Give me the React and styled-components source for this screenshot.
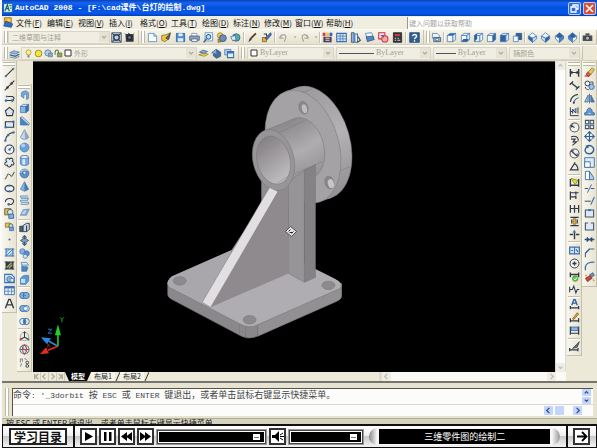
import React from "react";
import styled, { createGlobalStyle } from "styled-components";

const GlobalStyle = createGlobalStyle`
  * { box-sizing: border-box; }
  body { margin: 0; background: #fff; font-family: "Noto Sans CJK SC", sans-serif; }
  button, input, select { font: inherit; color: inherit; margin: 0; padding: 0; border: 0; background: none; border-radius: 0; }
`;

/* ---------- icon drawings: [path, fill, stroke, stroke width] ---------- */
const K = "#303a4a";
const B = "#3a70b0";
const L = "#9cc3ec";
const G = "#8b8b86";
const circ = (x, y, r) => `M${x - r} ${y}a${r} ${r} 0 1 0 ${2 * r} 0a${r} ${r} 0 1 0 ${-2 * r} 0z`;
const CUBE_T = "M2 5L6 2H14L10 5Z";
const CUBE_F = "M2 5H10V14H2Z";
const CUBE_S = "M10 5L14 2V11L10 14Z";
const cube = (t, f, s) => [[CUBE_T, t, B], [CUBE_F, f, B], [CUBE_S, s, B]];
const iso = (a, b, c) => [["M8 1L14 6L8 9L2 6Z", a, B], ["M2 6L8 9V15L2 10Z", b, B], ["M14 6L8 9V15L14 10Z", c, B]];
const dimEnds = [["M2 3V14M14 3V14", 0, K, 2], ["M2 8H14M5 6L2 8L5 10M11 6L14 8L11 10", 0, K, 1.5]];

const ICONS = {
  dwg: [["M2 1H12V9H2Z", "#e9b33b", "#8e5d10"], ["M4 6L14 10L12 15L1 13Z", "#2c6fce", "#1b3f80"], ["M5 4L9 3L11 6Z", "#f6e9a4"]],
  app: [["M1 1H15V15H1Z", "#d7efe8", "#1c4e73"], ["M3 13L7 3L10 13M5 9H9", 0, "#12686d", 2], ["M10 4H14M11 8H14", 0, "#2f9c6e", 2]],
  gear: [["M1 1H15V15H1Z", "#bcd0e6", K], [circ(8, 8, 4), 0, K, 2], ["M2 2L5 5M14 2L11 5M2 14L5 11M14 14L11 11", 0, K, 1.5]],
  gear2: [["M2 3H6V1L9 3H14V14H3Z", "#30343b"], [circ(8, 8, 3), "#5c6b80", "#101216"], ["M0 1L3 4M15 1L13 4M0 15L3 12", 0, G, 1]],
  new: [["M2 2H10L14 6V14H2Z", "#f5fbff", "#3a77b9"], ["M10 2V6H14", "#b9d6f4", "#3a77b9"]],
  open: [["M1 5L7 4L14 1L12 9L6 14L1 12Z", "#f2c33c", "#7d6116"], ["M7 9L13 2L11 11Z", "#526d86", K]],
  save: [["M2 2H14V14H2Z", "#4e8fd2", "#1c4f93"], ["M5 2H11V6H5Z", "#e7f2fc"], ["M4 9H12V14H4Z", "#dceafa"]],
  plot: [["M4 2H11L12 6H4Z", "#fff", "#6a7a93"], ["M1 6H15V12H1Z", "#8ea5c6", "#35507a"], ["M4 10H12V14H4Z", "#eef4fb", "#35507a"]],
  preview: [["M3 1H14V13H3Z", "#fafdff", "#3a77b9"], [circ(8, 7, 3.4), "#bcdcf6", "#315f92", 1.5], ["M5 10L1 15", 0, "#315f92", 2]],
  publish: [[circ(6, 5, 4), "#f2cd3c", "#8d741b"], [circ(10, 9, 5), "#6a8dc0", "#2c446d"], ["M3 10L8 14L3 15Z", "#e3ac2e", "#69531a"]],
  globe: [[circ(9, 8, 5.5), "#57a3b9", "#244e78"], ["M1 7L7 5L9 11L4 13Z", "#dceafc", "#386191"], ["M10 3L13 5L11 9Z", "#6cb057"]],
  brush: [["M2 15L4 9L7 11Z", K], ["M5 10L13 2", 0, "#56391d", 2.5]],
  match: [["M2 8H8V14H2Z", "#e8ac2d", "#69531a"], ["M6 9L14 1L15 4L9 11Z", "#3c78bd", "#1e3660"], ["M4 3H8V6", 0, K, 1.5]],
  undo: [["M2 9L5 4M2 9L8 9M3 8C7 1 15 3 9 14", 0, "#a9a69c", 1.8]],
  redo: [["M14 9L11 4M14 9L8 9M13 8C9 1 1 3 7 14", 0, "#a9a69c", 1.8]],
  down: [["M5 7H11L8 10Z", "#9b988d"]],
  props: [["M1 1H5V6H1Z", "#df3653"], ["M6 1H10V6H6Z", "#e6c83a"], ["M11 1H15V6H11Z", "#3d59c8"], ["M2 7H14V15H2Z", "#4a3d55"], ["M5 9H11M5 12H11", 0, "#f2d9e8", 1.5]],
  center: [["M1 2H15V14H1Z", "#d3e5f7", B, 1.5], ["M6 2V14M10 2V14M1 6H15M1 10H15", 0, B, 1]],
  palettes: [["M2 1H6V15H2Z", "#8bb5df", K], ["M7 3H11V15H7Z", "#e8f2fc", B, 1.5], ["M12 7L15 12L11 15", 0, K, 1.5]],
  sheets: [["M2 2L11 1L14 8L5 10Z", "#f0f7ff", B], ["M3 7L13 6L15 11L5 14Z", "#5288bc", "#284c7d"]],
  markup: [["M1 1H10V10H1Z", "#fae2e3", "#d22e43", 1.5], [circ(10, 10, 4.5), "#f1a9ae", "#d22e43", 1.5], ["M4 5H8V8", 0, B, 1.5]],
  calc: [["M2 1H14V15H2Z", "#32333a", "#18191d"], ["M4 3H12V6H4Z", "#c3443d"], ["M4 9H6M8 9H10M4 12H6M8 12H12", 0, "#ddd", 1.5]],
  help: [["M1 1H15V15H1Z", "#2e6095", "#173b62"], ["M5.5 6C5 3 11 2.500 11 6C11 8 8 8 8 10.500M8 12V14", 0, "#fff", 2]],
  named: [["M2 2H9L12 5V9H2Z", "#e9f3fd", "#456b95"], ["M4 8H14V14H4Z", "#8eb2d8", "#26476f"], [circ(9, 11, 2), "#fff", "#26476f"]],
  vTop: cube("#2c629f", "#f1f7fd", "#dbe8f4"),
  vBottom: [...cube("#f1f7fd", "#f1f7fd", "#dbe8f4"), ["M2 14L5 10H13L10 14Z", "#2c629f"]],
  vLeft: [...cube("#f1f7fd", "#e6f0fa", "#f1f7fd"), ["M2 5L6 2V10L2 14Z", "#2c629f"]],
  vRight: cube("#f1f7fd", "#f1f7fd", "#2c629f"),
  vFront: cube("#dceafa", "#2c629f", "#dbe8f4"),
  vBack: [["M6 2H14V11H6Z", "#2c629f", "#1f4878"], ["M2 6H9V14H2Z", "#f1f7fd", B]],
  isoSW: iso("#eaf3fc", "#2c629f", "#c2d9ee"),
  isoSE: iso("#eaf3fc", "#c2d9ee", "#2c629f"),
  isoNE: iso("#2c629f", "#eaf3fc", "#4e83b8"),
  isoNW: iso("#2c629f", "#4e83b8", "#eaf3fc"),
  camera: [["M1 5H15V13H1Z", "#4a4d54"], [circ(8, 9, 3), "#a7b8ca", "#222"], ["M5 2H11V5H5Z", "#4a4d54"]],
  layers: [["M1 7L7 4L15 6L9 9Z", "#9cbede", "#49729b"], ["M1 10L9 12L15 9", 0, "#3f6690", 2], ["M1 13L9 15L15 12", 0, "#7295b8", 1.5]],
  bulb: [[circ(8, 6, 4.5), "#fbf08b", "#b79b27", 1.5], ["M6 11H10V15H6Z", "#7d8ba1"]],
  sun: [[circ(8, 8, 6), "#f6e536", "#8a8a2b", 1.5]],
  freeze: [[circ(7, 7, 5.5), "#b7cde4", "#5f7d9c", 1.5], ["M8 7H15V14H8Z", "#8fa7bf", "#556f8a"]],
  lock: [["M6 7H14V14H6Z", "#8da65e", "#4e6530"], ["M2 10V5C2 1 8 1 8 5V8", 0, "#6c7b4d", 2]],
  swatch: [["M2 2H14V14H2Z", "#fff", "#333", 2]],
  layerPrev: [["M1 10L9 12L15 9L8 7Z", "#f0cf45", "#8a7a29"], ["M2 6L7 3L14 5L9 8Z", "#7ba8d4", "#40668d"]],
  layerUndo: [["M8 2L14 6V12L8 15L3 11Z", "#3f6ea0", "#274d76"], ["M7 2L1 7L8 9", "#88b1d8", "#31577e"]],
  layerState: [["M1 2H10V10H1Z", "#b3d1ec", B], ["M5 5H14V14H5Z", "#e2effb", B, 1.5], ["M5 5H14V8H5Z", B]],
  line: [["M2 14L14 2", 0, K, 1.6], [circ(2.500, 13.500, 1.5), B], [circ(13.500, 2.500, 1.5), B]],
  xline: [["M1 15L15 1", 0, K, 1.6], [circ(5, 11, 1.8), K], [circ(11, 5, 1.8), K]],
  pline: [["M3 5H12C16 6 15 11 11 11H2", 0, K, 1.5], [circ(3, 11, 2), B], [circ(4, 5, 1.5), B], ["M11 8L15 11L11 14Z", B]],
  polygon: [["M8 2L14 7L12 14H4L2 7Z", "#dbe4ed", K, 1.6]],
  rect: [["M2 4H14V12H2Z", "#dceaf7", K, 1.6], [circ(2.500, 12, 1.8), B], [circ(13.500, 4, 1.8), B]],
  arc: [["M2 14C3 7 6 3 14 2", 0, K, 1.6], [circ(2, 14, 1.7), B], [circ(6, 6, 1.7), B], [circ(14, 2, 1.7), B]],
  circle: [[circ(8, 8, 6.500), "#edf3f8", K, 1.7], [circ(8, 8, 1.7), B], ["M8 8L12 4", 0, B, 1.5]],
  cloud: [["M4 7C0 2 7 0 8 3C11 0 15 3 12 6C17 9 13 13 11 11C10 16 5 15 5 12C0 13 0 8 4 7Z", "#e5ecf2", K, 1.5]],
  spline: [["M1 13C5 13 4 4 7 6C11 8 10 13 15 3", 0, "#565d66", 1.5]],
  ellipse: [["M1.500 8a6.500 4.500 0 1 0 13 0a6.500 4.500 0 1 0 -13 0z", "#e7f1fa", K, 1.7], [circ(8, 4, 1.6), B], [circ(8, 12, 1.6), B]],
  ellArc: [["M2 9C1 2 15 2 14 8C13 12 10 13 7 12", 0, K, 1.5], [circ(7, 12, 2), B]],
  block: [["M1 1H10V10H1Z", "#e5c53c", K], [circ(9, 6, 4), "#dae7f1", K], ["M7 9H14V15H7Z", "#89b2db", B, 1.4]],
  block2: [["M2 3H9V9H2Z", "#e8ca4a", "#6f6123"], [circ(10, 7, 3), "#c7daeb", K], ["M8 9H14V14H8Z", "#6f9ed0", B]],
  point: [[circ(8, 8, 1.5), B]],
  hatch: [["M3 3H13V13H3Z", "#c3def3", B, 1.5], ["M3 13L13 3M3 8L8 3M8 13L13 8M1 3H4M12 3H15M1 13H4M12 13H15", 0, B, 1.1]],
  gradient: [["M3 3H13V13H3Z", "#303335", K, 1.5], ["M4 11L11 4M7 12L12 7", 0, "#a9ad6a", 2], ["M1 3H4M12 3H15M1 13H4M12 13H15", 0, K, 1.3]],
  region: [["M1 2H11L15 6V14H1Z", "#dfedf9", B, 1.5], [circ(8, 9, 4), "#92bae0", B, 1.3], ["M9 8H14V13H9Z", "#dfedf9", B]],
  table: [["M1 2H15V14H1Z", "#eaf3fc", B, 1.3], ["M1 2H15V5H1Z", B], ["M1 9H15M6 5V14M11 5V14", 0, B, 1]],
  text: [["M2 15L7 2H9L14 15M4 10H12", 0, K, 2]],
  polysolid: [["M4 3L10 1L14 4V12L11 14V6L7 7V12L3 9Z", "#78a9dc", "#4d7fb4"]],
  box: cube("#e2effb", "#8bb5e2", "#386fa9"),
  wedge: [["M2 2L14 13H2Z", "#4d84bc", B], ["M2 2L5 1L15 11L14 13Z", "#c6def5", B], ["M2 13L14 15V13Z", L]],
  cone: [["M8 1L14 12C12 16 4 16 2 12Z", "#c6d8ec", "#65809e"], ["M8 1L14 12C13 14 11 15 9 15Z", "#8aa5c4"]],
  sphere: [[circ(8, 8, 6.5), "#6a9fd8", "#4a7db6"], [circ(6, 5, 3), "#a9cff3"]],
  cyl: [["M2 3C4 0 12 0 14 3V13C12 16 4 16 2 13Z", "#77a8dc", B], ["M2 3C4 6 12 6 14 3C12 0 4 0 2 3Z", "#e9f3fd", B], ["M5 6H9V14H5Z", "#d6e9fa"]],
  torus: [[circ(8, 8, 6.5), "#5c90c6", "#3f6fa4"], [circ(8, 7, 2.3), "#e8eef4", "#2f5f94"], ["M3 7C3 2 10 2 12 4", 0, "#9fc6ec", 2]],
  pyramid: [["M8 1L14 12L8 15L2 12Z", "#88b2df", "#4a79ad"], ["M8 1L14 12L8 15Z", "#4379b5"]],
  helix: [["M2 3H13M3 6H14M2 9H13M3 12H14M2 15H13", 0, "#5a92ca", 1.6], ["M2 3L3 6M13 6L13 9M2 9L3 12M14 12V15", 0, B, 1]],
  planar: [["M2 12L6 4L15 3L11 12Z", "#83aede", "#6489b3"], ["M4 10L7 5L11 5L8 10Z", "#bcd8f3"]],
  extrude: [["M1 6H6V14H1Z", "#525d6b", K], ["M6 5L11 2H15V11L11 14H6Z", "#c4d6e7", K, 1.3], ["M11 5V14", 0, K, 1.5]],
  presspull: [["M8 4L14 8L8 12L2 8Z", "#7d9bbc", K], ["M8 1V6M5 4L8 1L11 4M8 10V15M5 12L8 15L11 12", 0, "#335987", 1.6]],
  sweep: [[circ(5, 5, 4), "#86b2e3", B], [circ(11, 8, 4), "#588ec8", B], [circ(9, 12, 3), "#d3e7f9", B]],
  revolve: [["M3 2H11L14 6H4Z", "#d9eafa", B], ["M4 7C8 10 12 6 13 10L11 15H4Z", "#4f85bd", B]],
  loft: [["M2 6L7 2H14V10L10 15H2Z", "#5995d7", "#3c74b2"], ["M3 7H9V13H3Z", "#c4def7"]],
  union: [[circ(5.500, 8, 4.500), "#82b0d8", B, 1.4], [circ(10.500, 8, 4.500), "#82b0d8", B, 1.4], ["M6 8H10", 0, B, 1]],
  subtract: [[circ(10.500, 8, 4.500), "#f2f7fc", B, 1.4], [circ(5.500, 8, 4.500), "#82b0d8", B, 1.4], [circ(9.500, 8, 3), "#fff", B]],
  intersect: [[circ(5.500, 8, 4.500), "#eef4fa", B, 1.4], [circ(10.500, 8, 4.500), 0, B, 1.4], ["M8 4C10 6 10 10 8 12C6 10 6 6 8 4Z", B]],
  move3d: [["M8 9V2M8 9L2 12M8 9L14 12", 0, K, 1.5], [circ(8, 8, 6), 0, G], ["M6 3L8 0L10 3Z", K], ["M1 10V14L5 13Z", "#c33"], ["M15 10V14L11 13Z", B]],
  rotate3d: [[circ(8, 8, 6.500), "#d6e2e8", "#3a8584", 1.5], ["M8 1C4 5 4 11 8 15C12 11 12 5 8 1M1 8H15", 0, "#c04848", 1.5], ["M3 3L13 13", 0, B]],
  align3d: [["M2 8V3H5V7M8 2L11 4M2 14L4 9", 0, G, 1.5], [circ(12, 8, 2), 0, K, 1.3], [circ(12, 13, 2), 0, K, 1.3]],
  dimLin: dimEnds,
  dimAli: [["M3 4L13 12M1 7L6 2M10 14L15 9", 0, K, 2]],
  dimArc: [["M2 13C3 6 6 3 13 2", 0, K, 1.6], ["M7 14C8 10 9 8 14 7", 0, B, 1.6], [circ(7, 14, 1.5), K]],
  dimOrd: [["M2 2V14H14M5 11V5L10 10V3M13 2V11M2 8H5", 0, K, 1.4], [circ(7, 7, 2), 0, B]],
  dimRad: [[circ(8, 8, 6.5), "#f0f1ec", "#55585c", 1.5], ["M8 8L3 5M3 5L6 4M3 5L4 8", 0, K, 1.5]],
  dimJog: [["M3 3C8 0 15 3 13 9", 0, K, 1.5], ["M3 6L9 6L6 10L11 10L5 15", 0, K, 1.6]],
  dimDia: [[circ(8, 8, 6.5), "#f0f1ec", "#55585c", 1.5], ["M3 4L12 12M3 4H7M12 12V8", 0, K, 1.5]],
  dimAng: [["M9 2L2 13H14M8 4C12 6 13 9 13 13", 0, K, 1.7]],
  dimQuick: [["M2 3V14M14 3V14M2 12H14", 0, K, 2], ["M3 2L13 5L9 11L6 7Z", "#e6dc31", "#6b7a1c"]],
  dimBase: [["M2 2V14M2 4H14M10 2V7M2 10H10M10 8V13", 0, K, 1.8]],
  dimCont: [["M2 3V14M8 3V14M14 3V14M2 8H14", 0, K, 1.8]],
  dimSpace: [["M2 2H14M2 14H14M4 5V11M12 5V11", 0, K, 1.8], ["M6 4H10V12H6Z", "#e2b13b", "#7b6431"]],
  dimBreak: [["M1 8H6M10 8H15M8 4V15", 0, K, 2], ["M5 5L8 1L10 5Z", B]],
  tol: [["M1 3H15V13H1Z", "#d4e6f6", B, 1.8], ["M8 3V13M3 8H6M10 6L13 10", 0, B, 1.5]],
  centerMark: [[circ(8, 8, 6.5), "#f2f3ef", K, 1.4], ["M8 5V11M5 8H11", 0, K, 2]],
  inspect: [["M2 2V9M14 2V9M2 5H14", 0, K, 2], [circ(9, 11, 4), "#6fc445", "#398a22"], ["M7 11L9 13L12 9", 0, "#fff", 1.3]],
  jogLine: [["M1 4V12M1 8H5L7 3L10 13L12 8H15", 0, K, 1.5]],
  dimEdit: [["M2 10V15M14 10V15M2 13H14", 0, K, 1.8], ["M4 9L7 1H9L12 9M5 6H11", 0, "#2d64a7", 2]],
  dimTedit: [["M2 9V15M14 9V15M2 13H14", 0, K, 1.8], ["M5 10L12 1L14 3L7 11Z", "#e3a32c", "#785018"]],
  dimUpd: [["M2 2V14M14 2V14M2 12H14", 0, K, 1.8], ["M3 3H13V8H3Z", "#8eb4dc", B, 1.3]],
  dimStyle: [["M1 10V15M13 10V15M1 13H13", 0, K, 1.8], ["M5 11L13 3L15 1L12 9Z", "#6c6e6f", K]],
  erase: [["M1 13H8", 0, "#cb3f3c", 2], ["M3 10L6 7L10 11L6 14Z", "#d7534f", "#863431"], ["M6 7L12 1L15 4L10 11Z", "#eac553", "#7f6a22"]],
  copy: [[circ(5, 5, 3.5), "#edf3f9", K, 1.4], [circ(11, 10, 3.8), "#a4c5e4", B, 1.4], ["M2 10C2 13 4 14 7 14M9 3L13 3L13 6", 0, K, 1.3]],
  mirror: [["M6 3V13H1Z", "#b1cde8", B, 1.3], ["M10 3V13H15Z", "#4a7cae", B, 1.3], ["M8 1V15", 0, K, 1]],
  offset: [["M1 13V10L4 9C4 1 12 1 12 9L15 10V13Z", "#6799cf", B, 1.4], ["M5 12C5 8 11 8 11 12Z", "#cfe2f5", B]],
  array: [["M2 2H7V7H2ZM9 2H14V7H9ZM2 9H7V14H2ZM9 9H14V14H9Z", "#e5edf4", "#43556d", 1.5]],
  move: [["M8 1V15M1 8H15M5 4L8 1L11 4M5 12L8 15L11 12M4 5L1 8L4 11M12 5L15 8L12 11", 0, "#2d619d", 1.6]],
  rotate: [["M4 4C8 0 15 4 14 9C13 15 5 16 2 11C1 8 2 6 4 4", 0, "#2d619d", 2], ["M2 2L7 2L6 7Z", "#2d619d"]],
  scale: [["M1 1H15V15H1Z", "#dceafa", B, 1.3], ["M1 7H9V15H1Z", "#fff", B, 1.3]],
  stretch: [["M2 2H8V14H2Z", "#fff", B, 1.3], ["M8 2L14 11V14H8Z", "#b6d1ec", B, 1.4]],
  trim: [["M1 8H6M10 8H15", 0, "#43556d", 1.5], ["M5 14L11 2", 0, B, 1.5]],
  extend: [["M1 9H10", 0, "#43556d", 1.5], ["M10 14L15 3", 0, B, 1.7]],
  breakPt: [["M2 3H14V13H2Z", "#dceaf8", "#43556d", 1.6], ["M6 3H10", 0, B, 3]],
  breakTwo: [["M6 3H2V13H14V3H10", "#dceaf8", "#43556d", 1.6]],
  join: [["M1 8H15M4 5L7 8L4 11M12 5L9 8L12 11", 0, "#2c4e7c", 2]],
  chamfer: [["M2 15V9L8 3H15", 0, "#56626f", 1.6], ["M2 9L8 3", 0, B, 2]],
  fillet: [["M2 15V10C3 5 6 3 15 3", 0, B, 2]],
  explode: [["M2 9L9 5L12 9L5 14Z", "#c8443d", "#7b2d29"], ["M8 4L13 1L15 5L11 7Z", "#6d93bf", "#314f79"], ["M2 4L4 6M13 11L15 13", 0, "#e29b34", 2]],
};

const Glyph = styled.svg`
  width: ${(p) => p.$size}px;
  height: ${(p) => p.$size}px;
  display: block;
  flex: none;
`;
function Icon({ name, size = 12 }) {
  return (
    <Glyph $size={size} viewBox="0 0 16 16" aria-hidden="true">
      {ICONS[name].map(([d, fill, stroke, w], i) => (
        <path key={i} d={d} fill={fill || "none"} stroke={stroke || "none"} strokeWidth={w || 1} />
      ))}
    </Glyph>
  );
}

/* ---------- window frame ---------- */
const Window = styled.div`
  min-height: 100vh;
  display: flex;
  flex-direction: column;
  background: #ece9d8;
  border-left: 2px solid #fbfbfd;
`;
const TitleBar = styled.header`
  height: 16px;
  display: flex;
  align-items: center;
  gap: 2px;
  padding: 0 1px;
  background: linear-gradient(#0a42b8 0, #1664f2 3px, #0450de 8px, #0558ee 13px, #0340b4);
`;
const Title = styled.h1`
  flex: 1;
  margin: 0;
  font: bold 8px/14px "Liberation Mono", "Noto Sans CJK SC", monospace;
  color: #fff;
  white-space: pre;
`;
const CaptionButton = styled.button`
  width: 13px;
  height: 13px;
  display: grid;
  place-items: center;
  border: 1px solid #b8ccf4;
  border-radius: 2px;
  background: ${(p) => (p.$close ? "#dc4b2b" : "#2f6ae0")};
`;

const MenuBar = styled.nav`
  height: 13px;
  display: flex;
  align-items: center;
  padding-left: 1px;
  background: #f0eee1;
`;
const MenuButton = styled.button`
  flex: none;
  min-width: 31px;
  padding-left: 2px;
  text-align: left;
  font-size: 8px;
  line-height: 12px;
  color: #111;
  white-space: nowrap;
`;
const HelpBox = styled.input`
  width: 32%;
  height: 12px;
  margin-left: auto;
  padding-left: 1px;
  border-left: 1px solid #9a998f;
  background: #fff;
  font-size: 7px;
  &::placeholder { color: #a5a398; opacity: 1; }
`;

const ToolRow = styled.div`
  display: grid;
  grid-template-columns: ${(p) => p.$columns};
  height: 16px;
  border-top: 1px solid #fbfaf4;
  border-bottom: 1px solid #d3cfbc;
`;
const ToolGroup = styled.div`
  display: flex;
  align-items: center;
  justify-content: ${(p) => (p.$start ? "flex-start" : "space-between")};
  gap: ${(p) => (p.$start ? 2 : 0)}px;
  min-width: 0;
  overflow: hidden;
  padding: 0 2px;
  border-right: 1px solid #c8c4b0;
  background: linear-gradient(#f7f5eb, #e5e1cf);
`;
const Grip = styled.span`
  flex: none;
  width: ${(p) => (p.$flat ? 12 : 4)}px;
  height: ${(p) => (p.$flat ? 4 : 12)}px;
  border: 1px solid #bdb9a5;
  ${(p) => (p.$flat ? "border-left: 0; border-right: 0;" : "border-top: 0; border-bottom: 0;")}
  background: #fff;
`;
const TallGrip = styled(Grip)`
  height: auto;
  align-self: stretch;
`;
const Divider = styled.span`
  flex: none;
  width: ${(p) => (p.$flat ? 12 : 2)}px;
  height: ${(p) => (p.$flat ? 2 : 11)}px;
  background: #c5c1ad;
  border: 0 solid #fff;
  border-width: ${(p) => (p.$flat ? "0 0 1px" : "0 1px 0 0")};
`;
const ToolButton = styled.button`
  flex: none;
  width: ${(p) => (p.$narrow ? 6 : 13)}px;
  height: 12px;
  display: grid;
  place-items: center;
  overflow: hidden;
`;
const Tools = ({ names, flat, size = 12 }) =>
  names.split(" ").map((n, i) =>
    n === "|" ? (
      <Divider key={i} $flat={flat} />
    ) : (
      <ToolButton key={i} aria-label={n} $narrow={n === "down"}>
        <Icon name={n} size={n === "down" ? 8 : size} />
      </ToolButton>
    )
  );

const Combo = styled.label`
  flex: ${(p) => p.$grow} 1 0;
  min-width: 0;
  height: 13px;
  display: flex;
  align-items: center;
  gap: 1px;
  padding-left: 2px;
  border: 1px solid #d9d5c5;
  background: #f0eee3;
`;
const ComboSelect = styled.select`
  flex: 1;
  min-width: 0;
  height: 11px;
  padding-left: 1px;
  appearance: none;
  font: ${(p) => (p.$latin ? '8px/10px "Liberation Serif", serif' : '7px/10px "Noto Sans CJK SC", sans-serif')};
  color: #a19e91;
`;
const ComboArrow = styled.svg`
  flex: none;
  width: 10px;
  height: 10px;
  background: #e6e3d6;
`;
const Sample = styled.span`
  flex: none;
  width: ${(p) => p.$length}px;
  height: 1px;
  background: #55534c;
`;
function DropDown({ label, value, grow, latin, children }) {
  return (
    <Combo $grow={grow}>
      {children}
      <ComboSelect aria-label={label} $latin={latin}>
        <option>{value}</option>
      </ComboSelect>
      <ComboArrow viewBox="0 0 10 10">
        <path d="M3 4L5 6L7 4" fill="none" stroke="#b2af9f" strokeWidth="1.3" />
      </ComboArrow>
    </Combo>
  );
}

/* ---------- work area ---------- */
const WorkArea = styled.div`
  flex: 1;
  display: flex;
  align-items: stretch;
  min-height: 0;
`;
const ToolStrip = styled.div`
  flex: none;
  align-self: flex-start;
  width: 15px;
  height: ${(p) => p.$height}px;
  margin-top: ${(p) => p.$top || 0}px;
  padding: 1px 0 2px;
  display: flex;
  flex-direction: column;
  align-items: center;
  justify-content: space-between;
  border: solid #c4c0ac;
  border-width: 0 1px 1px 0;
  background: linear-gradient(90deg, #f8f6ed, #e8e4d3);
`;
const Drawing = styled.main`
  flex: 1;
  min-width: 0;
  display: flex;
  flex-direction: column;
  margin: 0 1px;
`;
const CanvasRow = styled.div`
  flex: 1;
  display: flex;
  min-height: 0;
`;
const Canvas = styled.div`
  flex: 1;
  min-width: 0;
  display: flex;
  background: #000;
  border-top: 1px solid #55534b;
`;
const Scene = styled.svg`
  flex: 1;
  min-width: 0;
  width: 100%;
  height: 100%;
`;
const VScroll = styled.div`
  width: 11px;
  display: flex;
  flex-direction: column;
  justify-content: space-between;
  background: #fcfcfa;
  border: solid #dedbce;
  border-width: 0 1px;
`;
const ScrollButton = styled.button`
  width: 9px;
  height: 9px;
  display: grid;
  place-items: center;
  border-radius: 1px;
  background: ${(p) => (p.$active ? "#c3d5fb" : "#eeece4")};
  color: ${(p) => (p.$active ? "#334f86" : "#bebbb0")};
`;
const Arrow = ({ d }) => (
  <Glyph $size={7} viewBox="0 0 8 8">
    <path d={d} fill="none" stroke="currentColor" strokeWidth="1.5" />
  </Glyph>
);
const UP = "M2 5L4 3L6 5";
const DOWN = "M2 3L4 5L6 3";
const LEFT = "M5 1L2 4L5 7";
const RIGHT = "M3 1L6 4L3 7";

const TabRow = styled.div`
  height: 9px;
  display: flex;
  align-items: stretch;
  background: #ece9d8;
`;
const TabNav = styled.button`
  width: 8px;
  height: 9px;
  display: grid;
  place-items: center;
  border-right: 1px solid #cfccbe;
  color: #aaa79b;
`;
const Tab = styled.button`
  height: 9px;
  padding: 0 ${(p) => (p.$active ? 6 : 3)}px;
  font-size: 7px;
  line-height: 9px;
  font-weight: ${(p) => (p.$active ? 700 : 400)};
  color: ${(p) => (p.$active ? "#fff" : "#222")};
  background: ${(p) => (p.$active ? "#000" : "#f5f3ea")};
  clip-path: ${(p) => (p.$active ? "polygon(0 0, 100% 0, calc(100% - 4px) 100%, 4px 100%)" : "none")};
`;
const Slash = styled.svg`
  width: 5px;
  height: 9px;
`;
const HScroll = styled.div`
  width: 35%;
  margin-left: auto;
  padding-right: 10px;
  display: flex;
  justify-content: space-between;
  background: #faf9f5;
  border-left: 3px solid #dedbce;
`;

/* ---------- command window ---------- */
const CommandWindow = styled.section`
  display: flex;
  padding: 5px 4px 2px 3px;
  border-top: 2px solid #77756b;
  background: #e6e3d1;
`;
const CommandBox = styled.div`
  flex: 1;
  min-width: 0;
  margin-left: 3px;
  display: grid;
  grid-template-columns: 1fr 11px;
  grid-template-rows: 15px 12px;
  border: solid #55534c;
  border-width: 1px 0 0 1px;
  background: #fcfcfb;
`;
const History = styled.output`
  overflow: hidden;
  font: 9px/11px "Noto Sans CJK SC", sans-serif;
  color: #444;
  white-space: pre;
`;
const Latin = styled.span`
  font: 8px/11px "Liberation Mono", monospace;
`;
const Spin = styled.div`
  display: grid;
  gap: 1px;
  align-content: end;
  button { height: 7px; }
`;
const Prompt = styled.div`
  grid-column: 1 / -1;
  display: flex;
  align-items: center;
  gap: 2px;
  padding-right: 11px;
  border-top: 1px solid #d8d7d2;
`;
const PromptInput = styled.input`
  flex: 1;
  min-width: 0;
  height: 10px;
  font-size: 8px;
`;
const Thumb = styled.span`
  width: 9px;
  height: 9px;
  margin-right: 7px;
  border-radius: 1px;
  background: #c3d5fb;
`;
const StatusBar = styled.footer`
  height: 6px;
  overflow: hidden;
  padding-left: 4px;
  border-top: 1px solid #b1ae9b;
  background: #d5d3bf;
  font-size: 8px;
  line-height: 8px;
  color: #222;
  white-space: nowrap;
`;

/* ---------- player ---------- */
const Player = styled.section`
  height: 24px;
  display: flex;
  align-items: center;
  gap: 2px;
  padding: 0 6px;
  border: solid #111;
  border-width: 2px 1px 1px;
  background: linear-gradient(#fff, #f0f0f0 45%, #c9c9c9 50%, #f4f4f4);
`;
const Bar = styled.span`
  flex: none;
  align-self: stretch;
  width: 2px;
  margin: 0 3px 0 4px;
  background: #111;
`;
const Contents = styled.button`
  flex: none;
  width: 58px;
  height: 17px;
  border: 2px solid #222;
  background: #fff;
  font-size: 12px;
  font-weight: 700;
  line-height: 12px;
  color: #111;
`;
const PlayerButton = styled.button`
  flex: none;
  width: 17px;
  height: 17px;
  display: grid;
  place-items: center;
  border: 2px solid #333;
  background: #fff;
`;
const Track = styled.label`
  flex: ${(p) => p.$grow} 1 0;
  min-width: 0;
  height: 14px;
  margin: 0 1px;
  display: flex;
  border: 1px solid #444;
  outline: 1px solid #999;
  padding: 1px;
  background: #fff;
`;
const Slider = styled.input`
  appearance: none;
  width: 100%;
  height: 10px;
  padding-right: 4px;
  background: #000;
  &::-webkit-slider-thumb {
    appearance: none;
    width: 7px;
    height: 6px;
    background: linear-gradient(#fff 2px, #777 2px, #777 3px, #fff 3px);
    border: 1px solid #fff;
  }
`;
const Caption = styled.div`
  flex: 188 1 0;
  min-width: 0;
  height: 17px;
  margin-left: 3px;
  padding: 1px 10px;
  border-radius: 9px;
  background: linear-gradient(90deg, #888, #f6f6f6 8px, #f6f6f6 calc(100% - 8px), #999);
`;
const CaptionText = styled.p`
  margin: 0;
  background: #000;
  color: #fff;
  text-align: center;
  font-size: 9px;
  line-height: 15px;
`;

const MENUS = [["文件", "F"], ["编辑", "E"], ["视图", "V"], ["插入", "I"], ["格式", "O"], ["工具", "T"], ["绘图", "D"], ["标注", "N"], ["修改", "M"], ["窗口", "W"], ["帮助", "H"]];

function Bracket() {
  const edge = "#787578";
  return (
    <Scene viewBox="33 61 523 309" role="img" aria-label="3D bracket">
      <defs>
        <linearGradient id="tube" gradientUnits="userSpaceOnUse" x1="280" y1="122" x2="302" y2="184">
          <stop offset="0" stopColor="#8b888b" />
          <stop offset="0.5" stopColor="#b0adb0" />
          <stop offset="1" stopColor="#908d90" />
        </linearGradient>
        <linearGradient id="bore" x1="0" y1="0" x2="0.3" y2="1">
          <stop offset="0" stopColor="#7d797d" />
          <stop offset="1" stopColor="#bdbabd" />
        </linearGradient>
        <linearGradient id="rim" gradientUnits="userSpaceOnUse" x1="310" y1="85" x2="335" y2="200">
          <stop offset="0" stopColor="#9b989b" />
          <stop offset="0.5" stopColor="#b5b2b5" />
          <stop offset="1" stopColor="#918e91" />
        </linearGradient>
      </defs>
      <g stroke={edge} strokeWidth="0.6" strokeLinejoin="round">
        <path d="M168 281V293Q168 296 172 298L242 335Q248 338 255 336L337 300Q342 298 342 295V282L255 322L240 321Z" fill="#8b888c" />
        <path d="M342 283V295Q342 298 337 300L258 335V323Z" fill="#939094" />
        <path d="M172 275L288 224L337 278Q344 282 341 287L258 323.500Q250 328 240 322.500L170 286Q165 281 172 275Z" fill="#b0adb2" stroke="none" />
        <path d="M168 281Q168 285 170 286L240 322.500Q250 328 258 323.500L341 287Q342 285 342 282" fill="none" />
        <path d="M240 323V334M246 326V336M258 324V335" fill="none" />
        <path d="M339 279L316 267.500L291 254V224L231 249L260 150H342Z" fill="#000" stroke="none" />
        <path d="M172 275L231.500 249V262L203 302L170 286Q165 281 172 275Z" fill="#aaa7ac" stroke="none" />
        {[[180, 279.500], [329, 284], [250, 318.500]].map(([x, y]) => (
          <ellipse key={x} cx={x} cy={y} rx="6.500" ry="4.200" fill="#8d8a8d" />
        ))}
      </g>
      <g stroke={edge} strokeWidth="0.5">
        <ellipse cx="314.500" cy="141" rx="36" ry="58" transform="rotate(-16 314.5 141)" fill="url(#rim)" />
        <path d="M286 89.700L297 85.700L332 196.300L321 200.300Z" fill="url(#rim)" stroke="none" />
        <ellipse cx="303.500" cy="145" rx="36" ry="58" transform="rotate(-16 303.5 145)" fill="#a5a2a6" />
        <path d="M303 91L313 87M341 169L351 165" />
        <ellipse cx="304" cy="106" rx="4.500" ry="6.500" transform="rotate(-16 304 106)" fill="#8a878a" />
        <ellipse cx="305" cy="107" rx="2.500" ry="4.500" transform="rotate(-16 305 107)" fill="#c0bdc0" stroke="none" />
        <ellipse cx="330" cy="181" rx="4.500" ry="6.500" transform="rotate(-16 330 181)" fill="#8a878a" />
        <ellipse cx="331.500" cy="182" rx="3" ry="4.500" transform="rotate(-16 331.5 182)" fill="#c8c5c8" stroke="none" />
        <path d="M262 176L289 171V207L231.500 262V249L262 203Z" fill="#8b888c" stroke="none" />
        <path d="M262 176L289 171V225H262Z" fill="#908d91" stroke="none" />
        <ellipse cx="304" cy="146.500" rx="20.500" ry="31" transform="rotate(-14 304 146.5)" fill="url(#tube)" />
        <path d="M264.700 129L294.700 117L313.300 176L283.300 188Z" fill="url(#tube)" stroke="none" />
        <path d="M264.700 129L294.700 117M275 133L305 119" fill="none" />
        <path d="M289 180L305 169V281L289 272Z" fill="#979498" />
        <path d="M305 168.500L316 163V276L305 281Z" fill="#858286" />
        <path d="M291 174L323 160" fill="none" />
        <ellipse cx="274" cy="158.500" rx="20.500" ry="31" transform="rotate(-14 274 158.5)" fill="#989598" />
        <ellipse cx="274" cy="158.500" rx="16.500" ry="24.500" transform="rotate(-14 274 158.5)" fill="url(#bore)" />
        <path d="M259 151L281 141M277 182L290 174" fill="none" stroke="#8b888b" />
        <path d="M278 190L289 186V272L211 306Z" fill="#8e8a8d" stroke="none" />
        <path d="M270 186L278.500 190L211 306L202.500 301Z" fill="#e2dfe3" />
      </g>
      <path d="M286 230L291 225L297 230L292 235Z" fill="#e8e8e8" stroke="#333" strokeWidth="0.8" />
      <path d="M289 230L291 228M292 232L294 230M290 231H293" fill="none" stroke="#222" />
      <g strokeWidth="1.6" fill="none">
        <path d="M58 345V333" stroke="#1bd321" />
        <path d="M55 334L58 323L61 334Z" fill="#1bd321" />
        <path d="M58 345L49 340" stroke="#2688e2" />
        <path d="M41 336L51 337L47 343Z" fill="#2688e2" />
        <path d="M58 345L48 349" stroke="#ea2920" />
        <path d="M40 353L46 346L49 352Z" fill="#ea2920" />
        <path d="M60 316L62 318L64 316M62 318V321" stroke="#18a51d" strokeWidth="1" />
        <path d="M48 328H52L48 332H52" stroke="#1d6cc0" strokeWidth="1" />
        <path d="M47 342L50 346M50 342L47 346" stroke="#a31e19" strokeWidth="1" />
      </g>
    </Scene>
  );
}

export default function App() {
  return (
    <>
      <GlobalStyle />
      <Window>
        <TitleBar>
          <Icon name="app" size={10} />
          <Title>AutoCAD 2008 - [F:\cad课件\台灯的绘制.dwg]</Title>
          <CaptionButton aria-label="Restore">
            <svg width="9" height="9" viewBox="0 0 9 9"><path d="M3 3V1H8V5H6M1 3H6V8H1Z" fill="none" stroke="#fff" strokeWidth="1.3" /></svg>
          </CaptionButton>
          <CaptionButton $close aria-label="Close">
            <svg width="9" height="9" viewBox="0 0 9 9"><path d="M1 1L8 8M8 1L1 8" stroke="#fff" strokeWidth="1.7" /></svg>
          </CaptionButton>
        </TitleBar>
        <MenuBar>
          <Icon name="dwg" size={11} />
          {MENUS.map(([t, k]) => (
            <MenuButton key={k}>{t}(<u>{k}</u>)</MenuButton>
          ))}
          <HelpBox aria-label="帮助" placeholder="键入问题以获取帮助" />
        </MenuBar>
        <ToolRow $columns="137fr 285fr 173fr">
          <ToolGroup>
            <Grip />
            <DropDown label="工作空间" value="二维草图与注释" grow={1} />
            <Tools size={11} names="gear gear2" />
          </ToolGroup>
          <ToolGroup>
            <Grip />
            <Tools size={11} names="new open save plot preview publish globe | brush match | undo down redo down | props center palettes sheets markup calc | help" />
          </ToolGroup>
          <ToolGroup>
            <Grip />
            <Tools size={11} names="named | vTop vBottom vLeft vRight vFront vBack | isoSW isoSE isoNE isoNW | camera" />
          </ToolGroup>
        </ToolRow>
        <ToolRow $columns="237fr 344fr 14fr">
          <ToolGroup>
            <Grip />
            <Tools size={11} names="layers" />
            <DropDown label="图层" value="外形" grow={1}>
              <Icon name="bulb" size={9} />
              <Icon name="sun" size={9} />
              <Icon name="freeze" size={9} />
              <Icon name="lock" size={9} />
              <Icon name="swatch" size={8} />
            </DropDown>
            <Tools size={11} names="layerPrev layerUndo layerState" />
          </ToolGroup>
          <ToolGroup $start>
            <Grip />
            <DropDown label="颜色" value="ByLayer" grow={87} latin>
              <Icon name="swatch" size={8} />
            </DropDown>
            <DropDown label="线型" value="ByLayer" grow={95} latin>
              <Sample $length={35} />
            </DropDown>
            <DropDown label="线宽" value="ByLayer" grow={74} latin>
              <Sample $length={20} />
            </DropDown>
            <DropDown label="打印样式" value="随颜色" grow={70} />
          </ToolGroup>
        </ToolRow>
        <WorkArea>
          <ToolStrip $height={252}>
            <Grip $flat />
            <Tools flat size={11} names="line xline pline polygon rect arc circle cloud spline ellipse ellArc block block2 point hatch gradient region table text" />
          </ToolStrip>
          <ToolStrip $height={288} $top={23}>
            <Grip $flat />
            <Tools flat size={11} names="polysolid box wedge cone sphere cyl torus pyramid helix planar | extrude presspull sweep revolve loft | union subtract intersect | move3d rotate3d align3d" />
          </ToolStrip>
          <Drawing>
            <CanvasRow>
              <Canvas>
                <Bracket />
              </Canvas>
              <VScroll>
                <ScrollButton aria-label="Up"><Arrow d={UP} /></ScrollButton>
                <ScrollButton aria-label="Down"><Arrow d={DOWN} /></ScrollButton>
              </VScroll>
            </CanvasRow>
            <TabRow>
              <TabNav aria-label="First"><Arrow d="M2 1V7M6 1L3 4L6 7" /></TabNav>
              <TabNav aria-label="Previous"><Arrow d={LEFT} /></TabNav>
              <TabNav aria-label="Next"><Arrow d={RIGHT} /></TabNav>
              <TabNav aria-label="Last"><Arrow d="M6 1V7M2 1L5 4L2 7" /></TabNav>
              <Tab $active>模型</Tab>
              <Tab>布局1</Tab>
              <Slash viewBox="0 0 5 9"><path d="M5 0L1 9" stroke="#333" /></Slash>
              <Tab>布局2</Tab>
              <Slash viewBox="0 0 5 9"><path d="M5 0L1 9" stroke="#333" /></Slash>
              <HScroll>
                <ScrollButton aria-label="Left"><Arrow d={LEFT} /></ScrollButton>
                <ScrollButton aria-label="Right"><Arrow d={RIGHT} /></ScrollButton>
              </HScroll>
            </TabRow>
          </Drawing>
          <ToolStrip $height={295}>
            <Grip $flat />
            <Tools flat size={11} names="dimLin dimAli dimArc dimOrd | dimRad dimJog dimDia dimAng | dimQuick dimBase dimCont dimSpace dimBreak | tol centerMark inspect jogLine | dimEdit dimTedit dimUpd | dimStyle" />
          </ToolStrip>
          <ToolStrip $height={226}>
            <Grip $flat />
            <Tools flat size={11} names="erase copy mirror offset array move rotate scale stretch trim extend breakPt breakTwo join chamfer fillet explode" />
          </ToolStrip>
        </WorkArea>
        <CommandWindow>
          <TallGrip />
          <CommandBox>
            <History>
              命令<Latin>: '_3dorbit </Latin>按<Latin> ESC </Latin>或<Latin> ENTER </Latin>键退出，或者单击鼠标右键显示快捷菜单。
            </History>
            <Spin>
              <ScrollButton $active aria-label="Up"><Arrow d={UP} /></ScrollButton>
              <ScrollButton $active aria-label="Down"><Arrow d={DOWN} /></ScrollButton>
            </Spin>
            <Prompt>
              <PromptInput aria-label="命令" />
              <ScrollButton $active aria-label="Left"><Arrow d={LEFT} /></ScrollButton>
              <Thumb />
              <ScrollButton $active aria-label="Right"><Arrow d={RIGHT} /></ScrollButton>
            </Prompt>
          </CommandBox>
        </CommandWindow>
        <StatusBar>按 ESC 或 ENTER 键退出，或者单击鼠标右键显示快捷菜单。</StatusBar>
        <Player>
          <Contents>学习目录</Contents>
          <Bar />
          <PlayerButton aria-label="Play"><svg width="11" height="11"><path d="M2 1L10 5.500L2 10Z" /></svg></PlayerButton>
          <PlayerButton aria-label="Pause"><svg width="11" height="11"><path d="M2 1H4.500V10H2ZM7 1H9.500V10H7Z" /></svg></PlayerButton>
          <PlayerButton aria-label="Rewind"><svg width="11" height="11"><path d="M6 1V10L0 5.500ZM11 1V10L5 5.500Z" /></svg></PlayerButton>
          <PlayerButton aria-label="Forward"><svg width="11" height="11"><path d="M0 1V10L6 5.500ZM5 1V10L11 5.500Z" /></svg></PlayerButton>
          <Track $grow={116}><Slider type="range" aria-label="Progress" defaultValue="100" /></Track>
          <PlayerButton aria-label="Mute"><svg width="12" height="11"><path d="M0 4H3L7 0V11L3 7H0Z" /><path d="M8 4L11 2M8 5.500H12M8 7L11 9" stroke="#000" /></svg></PlayerButton>
          <Track $grow={77}><Slider type="range" aria-label="Volume" defaultValue="100" /></Track>
          <Caption><CaptionText>三维零件图的绘制二</CaptionText></Caption>
          <Bar />
          <PlayerButton aria-label="Next"><svg width="12" height="11"><path d="M1 5.500H10M6 1L10.500 5.500L6 10" fill="none" stroke="#000" strokeWidth="1.8" /></svg></PlayerButton>
        </Player>
      </Window>
    </>
  );
}
